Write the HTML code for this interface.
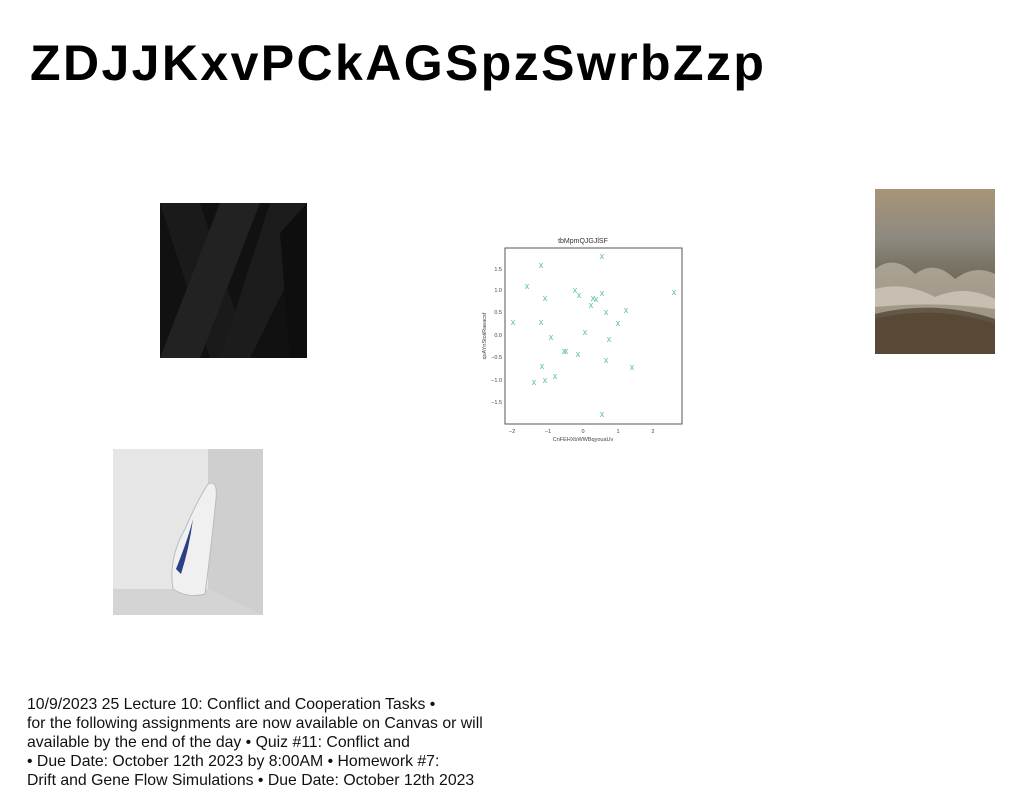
<!DOCTYPE html>
<html><head><meta charset="utf-8"><style>
body{margin:0;width:1024px;height:788px;background:#fff;position:relative;overflow:hidden;font-family:"Liberation Sans",sans-serif}
h1{position:absolute;left:30px;top:34px;margin:0;font-size:50px;font-weight:bold;line-height:58px;letter-spacing:2.4px}
.p{position:absolute;left:27px;top:695px;font-size:15.8px;line-height:19px;color:#111;white-space:nowrap}
</style></head><body>
<h1>ZDJJKxvPCkAGSpzSwrbZzp</h1>
<svg style="position:absolute;left:160px;top:203px" width="147" height="155"><rect width="147" height="155" fill="#111"/><polygon points="0,0 40,0 90,155 50,155" fill="#1a1a1a"/><polygon points="60,0 100,0 40,155 0,155" fill="#222"/><polygon points="110,0 147,0 147,40 90,155 60,155" fill="#1c1c1c"/><polygon points="120,30 147,0 147,155 130,155" fill="#0e0e0e"/></svg>
<svg style="position:absolute;left:875px;top:189px" width="120" height="165"><defs><linearGradient id="s" x1="0" y1="0" x2="0" y2="1"><stop offset="0" stop-color="#a89478"/><stop offset=".3" stop-color="#8d8a80"/><stop offset=".45" stop-color="#7a7566"/><stop offset="1" stop-color="#4e3f30"/></linearGradient></defs><rect width="120" height="165" fill="url(#s)"/><path d="M0,80 Q20,65 40,85 Q60,70 80,90 Q100,75 120,85 L120,130 Q60,110 0,125Z" fill="#c9c1b0" opacity=".6"/><path d="M0,100 Q30,92 60,108 Q90,95 120,110 L120,120 Q60,112 0,118Z" fill="#e0d9cc" opacity=".6"/><path d="M0,130 Q60,115 120,135 L120,165 L0,165Z" fill="#5a4837"/></svg>
<svg style="position:absolute;left:113px;top:449px" width="150" height="166"><rect width="150" height="166" fill="#dcdcdc"/><rect x="0" y="0" width="95" height="166" fill="#e6e6e6"/><rect x="95" y="0" width="55" height="166" fill="#cfcfcf"/><path d="M0,140 L95,140 L150,166 L0,166Z" fill="#d4d4d4"/><path d="M60,140 Q55,110 72,80 Q85,50 95,35 Q105,30 103,50 Q98,100 92,145 Q75,150 60,140Z" fill="#f0f0f0" stroke="#bbb"/><path d="M63,120 Q75,90 80,70 Q76,100 68,125Z" fill="#2a3f85"/></svg>
<svg style="position:absolute;left:480px;top:230px" width="220" height="220" font-family="Liberation Sans,sans-serif">
<text x="103" y="13" font-size="7" text-anchor="middle" fill="#333">tbMpmQJGJlSF</text>
<rect x="25" y="18" width="177" height="176" fill="none" stroke="#555" stroke-width="1"/>
<g font-size="5.5" fill="#444" text-anchor="end">
<text x="22" y="41">1.5</text><text x="22" y="62">1.0</text><text x="22" y="84">0.5</text><text x="22" y="107">0.0</text><text x="22" y="129">−0.5</text><text x="22" y="152">−1.0</text><text x="22" y="174">−1.5</text></g>
<g font-size="5.5" fill="#444" text-anchor="middle">
<text x="32" y="203">−2</text><text x="68" y="203">−1</text><text x="103" y="203">0</text><text x="138" y="203">1</text><text x="173" y="203">2</text>
<text x="103" y="211">CnFEHXbWWBqyouaUv</text></g>
<text transform="translate(6,106) rotate(-90)" font-size="5.5" fill="#444" text-anchor="middle">qxAYnStoiiRaeacsf</text>
<g font-size="9" fill="#5cbfa6" text-anchor="middle">
<text x="122" y="29">x</text><text x="61" y="38">x</text><text x="47" y="59">x</text><text x="95" y="63">x</text><text x="122" y="66">x</text><text x="194" y="65">x</text><text x="99" y="68">x</text><text x="65" y="71">x</text><text x="113" y="71">x</text><text x="116" y="72">x</text><text x="111" y="78">x</text><text x="126" y="85">x</text><text x="146" y="83">x</text><text x="33" y="95">x</text><text x="61" y="95">x</text><text x="138" y="96">x</text><text x="105" y="105">x</text><text x="71" y="110">x</text><text x="129" y="112">x</text><text x="84" y="124">x</text><text x="86" y="124">x</text><text x="98" y="127">x</text><text x="126" y="133">x</text><text x="62" y="139">x</text><text x="152" y="140">x</text><text x="75" y="149">x</text><text x="54" y="155">x</text><text x="65" y="153">x</text><text x="122" y="187">x</text></g>
</svg>
<div class="p">10/9/2023 25 Lecture 10: Conflict and Cooperation Tasks •<br>for the following assignments are now available on Canvas or will<br>available by the end of the day • Quiz #11: Conflict and<br>• Due Date: October 12th 2023 by 8:00AM • Homework #7:<br>Drift and Gene Flow Simulations • Due Date: October 12th 2023</div>
</body></html>
